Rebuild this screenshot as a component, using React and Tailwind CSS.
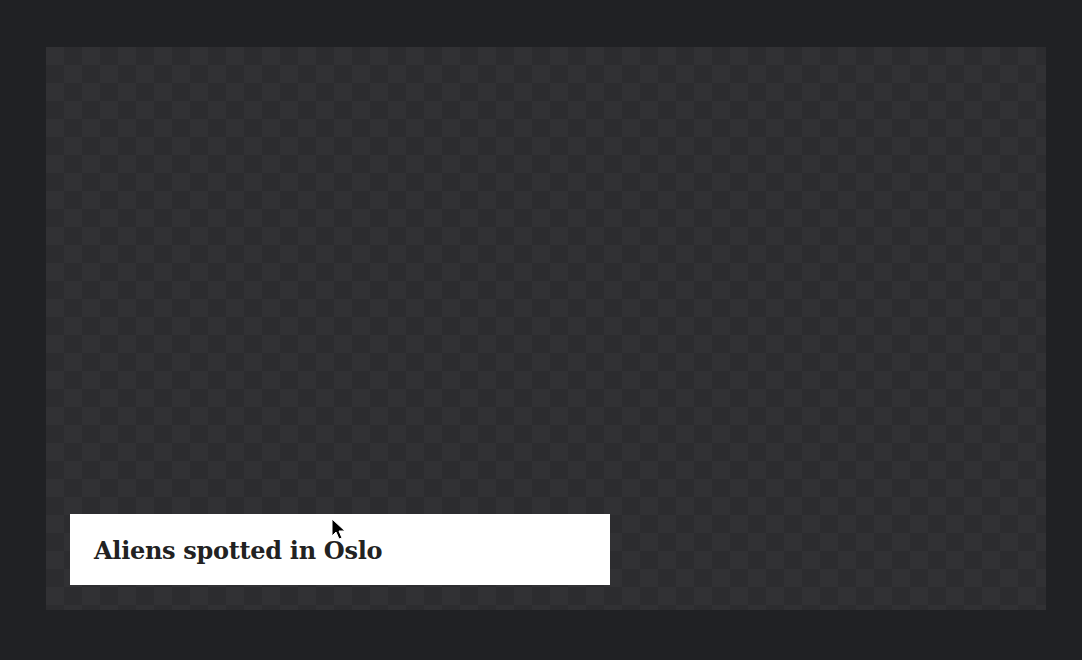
import React from "react";

export default function App() {
  return (
    <div className="w-full h-[660px] bg-[#202124] pt-[47px] pl-[46px]">
      <div className="relative w-[1000px] h-[563px] bg-[#2e2e31] bg-[image:conic-gradient(#2c2c2f_25%,#313134_0_50%,#2c2c2f_0_75%,#313134_0)] bg-size-[36px_36px] flex flex-col justify-end pl-[24px] pb-[25px]">
        <div className="w-[540px] h-[71px] bg-white flex items-center pl-[24px] pt-[3px]">
          <h1 className="text-[24px] tracking-[-0.3px] font-bold text-[#222] font-['DejaVu_Serif',serif]">
            Aliens spotted in Oslo
          </h1>
        </div>
        {/* mouse pointer */}
        <svg
          className="absolute left-[285px] top-[471px]"
          width="16"
          height="24"
          viewBox="0 0 16 24"
        >
          <path
            d="M1 1 L1 18 L5 14 L8 21 L11 20 L8 13 L14 13 Z"
            fill="#000"
            stroke="#fff"
            strokeWidth="1"
          />
        </svg>
      </div>
    </div>
  );
}
